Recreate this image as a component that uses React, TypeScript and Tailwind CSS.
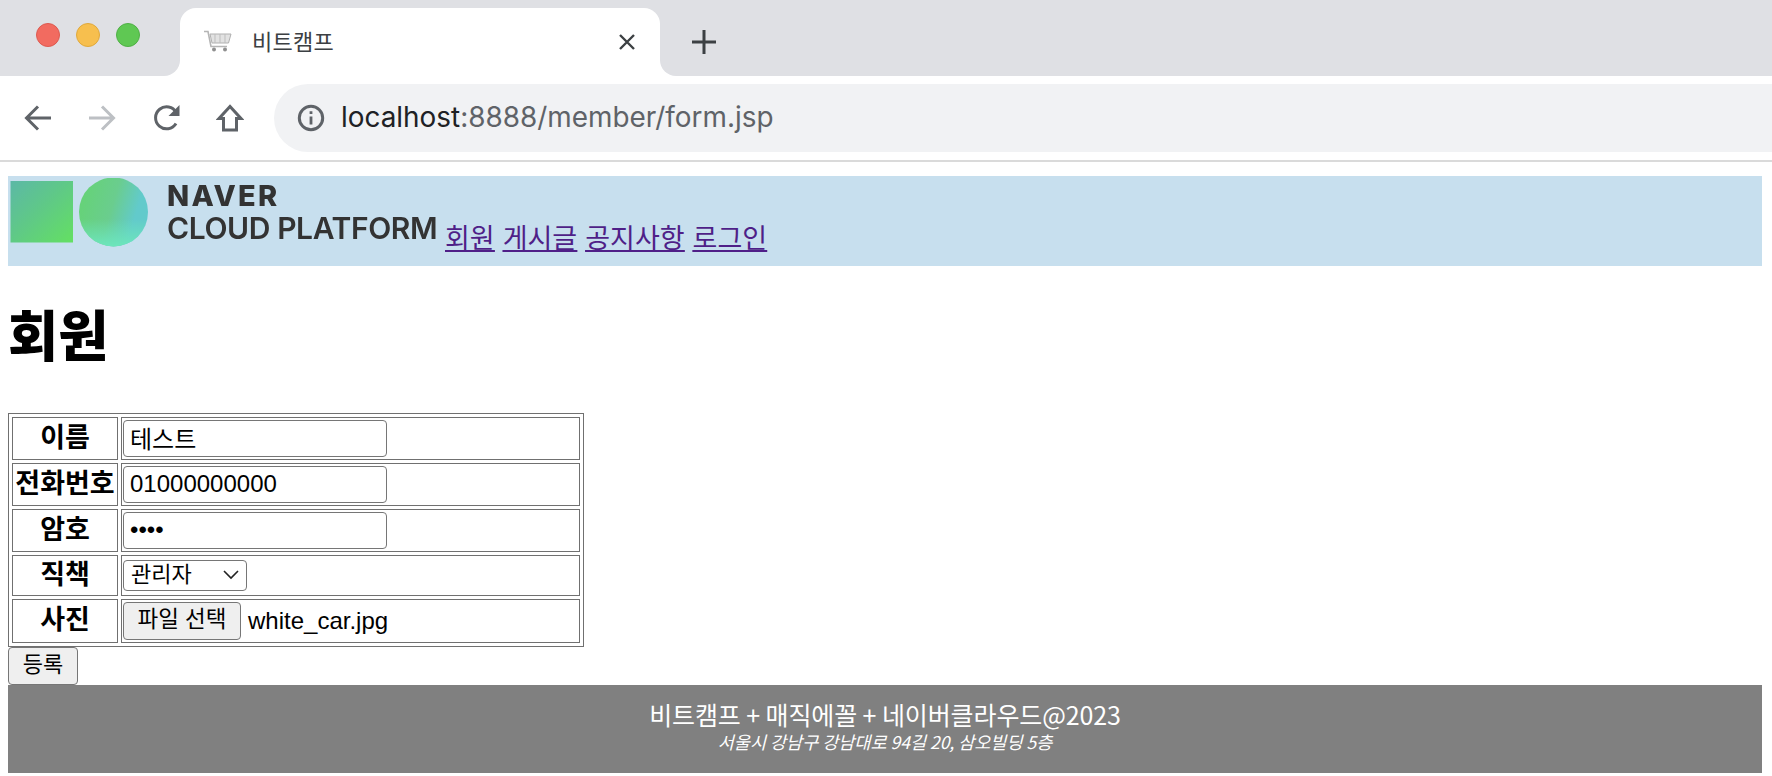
import React from "react";

function BackIcon({ className }: { className: string }) {
  return (
    <svg viewBox="0 0 28 28" className={className} fill="none" stroke="currentColor" strokeWidth="3">
      <path d="M27 14H3M14 2.5 2.5 14 14 25.5" />
    </svg>
  );
}

function ReloadIcon() {
  return (
    <svg viewBox="0 0 28 28" className="w-7 h-7 text-[#5f6368]">
      <path d="M24 19.5a11 11 0 1 1 .2-11" fill="none" stroke="currentColor" strokeWidth="3" />
      <path d="M27.5 1v11h-11z" fill="currentColor" />
    </svg>
  );
}

function HomeIcon() {
  return (
    <svg viewBox="0 0 28 28" className="w-7 h-7 text-[#5f6368]" fill="none" stroke="currentColor" strokeWidth="3">
      <path d="M14 2.5 3 14.5H7.5V26h13V14.5H25z" />
    </svg>
  );
}

function InfoIcon() {
  return (
    <svg viewBox="0 0 28 28" className="w-7 h-7 text-[#5f6368]">
      <circle cx="14" cy="14" r="11.7" fill="none" stroke="currentColor" strokeWidth="3" />
      <path d="M12.6 12.5h2.8v8h-2.8zM12.6 7.3h2.8v2.8h-2.8z" fill="currentColor" />
    </svg>
  );
}

function CartIcon() {
  return (
    <svg viewBox="0 0 30 22" className="w-[30px] h-[22px]">
      <path d="M1 1.5h4l3 15h16" fill="none" stroke="#b5b5b5" strokeWidth="1.6" />
      <path d="M7 4h21l-2.5 9H9z" fill="#e2e2e2" stroke="#b0b0b0" strokeWidth="1" />
      <path d="M12 4v9M17 4v9M22 4v9" stroke="#bdbdbd" strokeWidth="1" />
      <circle cx="11" cy="19.5" r="2" fill="#8f8f8f" />
      <circle cx="22" cy="19.5" r="2" fill="#8f8f8f" />
    </svg>
  );
}

function LogoShapes() {
  return (
    <svg viewBox="0 0 145 70" className="w-[145px] h-[70px] blur-[0.4px]">
      <defs>
        <linearGradient id="sq" x1="0" y1="0" x2="1" y2="1">
          <stop offset="0" stopColor="#5cb8a6" />
          <stop offset="0.45" stopColor="#5fc888" />
          <stop offset="1" stopColor="#64e062" />
        </linearGradient>
        <linearGradient id="ci" x1="0" y1="0.2" x2="1" y2="0.5">
          <stop offset="0.1" stopColor="#66d27a" />
          <stop offset="0.5" stopColor="#6acd8e" />
          <stop offset="0.85" stopColor="#62cacb" />
        </linearGradient>
        <linearGradient id="cb" x1="0" y1="0" x2="0" y2="1">
          <stop offset="0.6" stopColor="#6de6bb" stopOpacity="0" />
          <stop offset="1" stopColor="#6de6bb" />
        </linearGradient>
      </defs>
      <rect x="2.5" y="3" width="62.5" height="61.5" fill="url(#sq)" />
      <circle cx="105.5" cy="34" r="34.5" fill="url(#ci)" />
      <circle cx="105.5" cy="34" r="34.5" fill="url(#cb)" />
    </svg>
  );
}

const labelClass = "border border-[#707070] p-0 pb-[2px] text-[27px] leading-[36px] font-bold text-center align-middle";
const fieldClass = "border border-[#707070] p-[1px] align-middle";
const inputClass =
  "block w-[264px] h-[37px] border border-[#767676] rounded-[4px] pl-[6px] pb-[2px] text-[24px] text-black bg-white outline-none";

export default function App() {
  return (
    <div className="w-[1772px] h-[776px] overflow-hidden bg-white text-black font-['Liberation_Sans','Noto_Sans_CJK_KR',sans-serif]">
      {/* Browser tab strip */}
      <div className="h-[76px] bg-[#dfe0e4] flex">
        <div className="w-[180px] flex items-start gap-4 pl-9 pt-[23px]">
          <span className="w-6 h-6 rounded-full bg-[#f26b60] border border-[#dd5a50]" />
          <span className="w-6 h-6 rounded-full bg-[#f7bf4e] border border-[#e0a93c]" />
          <span className="w-6 h-6 rounded-full bg-[#5fc853] border border-[#50b046]" />
        </div>
        <div className="relative mt-2 w-[480px] bg-white rounded-t-2xl flex items-center pl-[23px] pr-6 pb-[3px]">
          <span className="absolute -left-4 bottom-0 w-4 h-4 bg-white">
            <span className="block w-4 h-4 bg-[#dfe0e4] rounded-br-2xl" />
          </span>
          <span className="absolute -right-4 bottom-0 w-4 h-4 bg-white">
            <span className="block w-4 h-4 bg-[#dfe0e4] rounded-bl-2xl" />
          </span>
          <CartIcon />
          <span className="ml-[19px] text-[22px] tracking-[0.3px] text-[#3c4043] font-['Noto_Sans_CJK_KR',sans-serif]">비트캠프</span>
          <svg viewBox="0 0 18 18" className="ml-auto mt-[3px] w-[18px] h-[18px] text-[#3c4043]" fill="none" stroke="currentColor" strokeWidth="2.4">
            <path d="M2 2l14 14M16 2 2 16" />
          </svg>
        </div>
        <div className="ml-[32px] pt-[30px]">
          <svg viewBox="0 0 24 24" className="w-6 h-6 text-[#3c4043]" fill="none" stroke="currentColor" strokeWidth="3">
            <path d="M12 0v24M0 12h24" />
          </svg>
        </div>
      </div>

      {/* Browser toolbar */}
      <div className="h-[86px] border-b-2 border-[#dadada] flex items-start pt-2">
        <div className="w-[274px] h-[68px] flex items-center pl-6 gap-9">
          <BackIcon className="w-7 h-7 text-[#5f6368]" />
          <BackIcon className="w-7 h-7 text-[#bdc0c4] rotate-180" />
          <ReloadIcon />
          <HomeIcon />
        </div>
        <div className="flex-1 h-[68px] bg-[#f1f2f4] rounded-l-[34px] flex items-center pl-[23px]">
          <InfoIcon />
          <span className="ml-[16px] text-[27.9px] font-['Inter',sans-serif] text-[#202124]">
            localhost<span className="text-[#5f6368]">:8888/member/form.jsp</span>
          </span>
        </div>
      </div>

      {/* Page */}
      <div className="pl-2 pr-[10px] pt-[14px]">
        <header className="h-[90px] bg-[#c7dfee] flex items-end">
          <div className="h-[90px] w-[437px] flex items-start shrink-0">
            <div className="pt-[2px]">
              <LogoShapes />
            </div>
            <div className="ml-[14px] pt-[3px] font-['Inter',sans-serif] text-[#333333] blur-[0.3px]">
              <div className="text-[29px] leading-[33px] font-extrabold tracking-[2.2px]">NAVER</div>
              <div className="text-[30px] leading-[32px] font-semibold tracking-[-0.4px] whitespace-nowrap">CLOUD PLATFORM</div>
            </div>
          </div>
          <nav className="flex gap-2 pb-[11px] text-[27px] leading-[36px] text-[#4f1f88] underline font-['Noto_Sans_CJK_KR',sans-serif]">
            <a href="#">회원</a>
            <a href="#">게시글</a>
            <a href="#">공지사항</a>
            <a href="#">로그인</a>
          </nav>
        </header>

        <h1 className="mt-[29px] mb-[43px] text-[54.5px] leading-[75px] font-extrabold font-['Noto_Sans_CJK_KR',sans-serif]">회원</h1>

        <form>
          <table className="w-[576px] border border-[#707070] border-separate border-spacing-[3px] table-fixed">
            <colgroup>
              <col className="w-[106px]" />
              <col />
            </colgroup>
            <tbody>
              <tr className="h-[43px]">
                <th className={labelClass}>이름</th>
                <td className={fieldClass}>
                  <input className={inputClass} readOnly value="테스트" />
                </td>
              </tr>
              <tr className="h-[43px]">
                <th className={labelClass}>전화번호</th>
                <td className={fieldClass}>
                  <input className={inputClass} readOnly value="01000000000" />
                </td>
              </tr>
              <tr className="h-[43px]">
                <th className={labelClass}>암호</th>
                <td className={fieldClass}>
                  <input className={inputClass} type="password" readOnly value="1111" />
                </td>
              </tr>
              <tr className="h-[41px]">
                <th className={labelClass}>직책</th>
                <td className={fieldClass}>
                  <div className="relative w-[124px] h-[31px]">
                    <select className="block w-full h-full appearance-none border border-[#767676] rounded-[4px] pl-[7px] pb-[2px] text-[22px] leading-[28px] bg-white">
                      <option>관리자</option>
                    </select>
                    <svg viewBox="0 0 16 10" className="absolute right-[8px] top-[10px] w-4 h-[10px] pointer-events-none" fill="none" stroke="#222" strokeWidth="1.6">
                      <path d="M1 1l7 7 7-7" />
                    </svg>
                  </div>
                </td>
              </tr>
              <tr className="h-[44px]">
                <th className={labelClass}>사진</th>
                <td className={fieldClass}>
                  <div className="flex items-center">
                    <button type="button" className="w-[118px] h-[38px] pb-[3px] border border-[#767676] rounded-[4px] bg-[#efefef] text-[22.5px] leading-[28px]">
                      파일 선택
                    </button>
                    <span className="ml-[7px] text-[24px]">white_car.jpg</span>
                  </div>
                </td>
              </tr>
            </tbody>
          </table>
          <button type="button" className="block w-[70px] h-[38px] pb-[2px] border border-[#767676] rounded-[4px] bg-[#efefef] text-[22px] leading-[28px]">
            등록
          </button>
        </form>

        <footer className="h-[88px] bg-[#808080] text-white text-center pt-[13px] font-['Noto_Sans_CJK_KR',sans-serif]">
          <div className="text-[25px] tracking-[-0.1px] leading-[32px]">비트캠프 + 매직에꼴 + 네이버클라우드@2023</div>
          <div className="text-[17.5px] leading-[24px] italic">서울시 강남구 강남대로 94길 20, 삼오빌딩 5층</div>
        </footer>
      </div>
    </div>
  );
}
